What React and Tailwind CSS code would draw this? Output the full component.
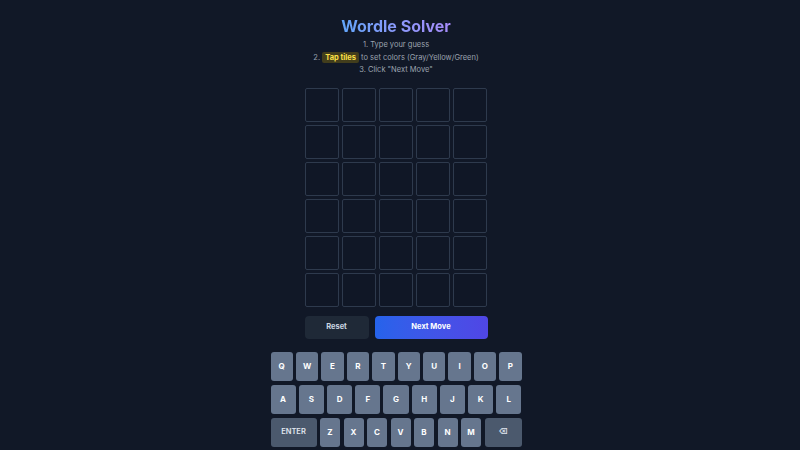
import React from 'react';

const ROWS = [
  ['Q', 'W', 'E', 'R', 'T', 'Y', 'U', 'I', 'O', 'P'],
  ['A', 'S', 'D', 'F', 'G', 'H', 'J', 'K', 'L'],
];
const BOTTOM = ['Z', 'X', 'C', 'V', 'B', 'N', 'M'];

function Key({ label, wide }) {
  return (
    <button
      className={`${wide ? 'bg-[#4b596d] text-[7.5px] font-semibold text-[#e2e8f0]' : 'flex-1 bg-[#66768e] text-[8px] font-bold text-white'} h-[29px] rounded-[3px] flex items-center justify-center`}
      style={wide ? { width: wide } : undefined}
    >
      {label}
    </button>
  );
}

export default function App() {
  return (
    <div
      className="h-[450px] overflow-hidden bg-[#111827] text-gray-400 pr-2"
      style={{ fontFamily: 'Inter, "Noto Sans", sans-serif' }}
    >
      <div className="flex flex-col items-center pt-[15px]">
        {/* Header */}
        <h1 className="text-[16px] leading-[23px] font-bold bg-gradient-to-r from-[#60a5fa] to-[#a78bfa] bg-clip-text text-transparent">
          Wordle Solver
        </h1>
        <div className="mt-[1px] text-[7.5px] leading-[12.5px] text-center text-[#9ca3af]">
          <p>1. Type your guess</p>
          <p>
            2.{' '}
            <span className="font-bold text-[#fde047] bg-[#423d1c] px-[3px] py-[1px] rounded-[2px]">Tap tiles</span>{' '}
            to set colors (Gray/Yellow/Green)
          </p>
          <p>3. Click "Next Move"</p>
        </div>

        {/* Board */}
        <div className="mt-[11px] grid grid-cols-5 gap-[3px]">
          {Array.from({ length: 30 }).map((_, i) => (
            <div
              key={i}
              className="w-[34px] h-[34px] border border-[#2e3a4d] rounded-[2px] bg-[#101726]"
            />
          ))}
        </div>

        {/* Actions */}
        <div className="mt-[9px] flex gap-[6px] w-[183px]">
          <button className="w-[64px] h-[23px] rounded-[4px] bg-[#1f2937] text-[7.5px] font-bold text-[#cbd5e1]">
            Reset
          </button>
          <button className="flex-1 h-[23px] rounded-[4px] bg-gradient-to-r from-[#2563eb] to-[#5046e5] text-[7.5px] font-bold text-white">
            Next Move
          </button>
        </div>

        {/* Keyboard */}
        <div className="mt-[13px] w-[251px] flex flex-col gap-[4px]">
          {ROWS.map((row, r) => (
            <div key={r} className="flex gap-[3px]">
              {row.map((k) => (
                <Key key={k} label={k} />
              ))}
            </div>
          ))}
          <div className="flex gap-[3.5px]">
            <Key label="ENTER" wide="46px" />
            {BOTTOM.map((k) => (
              <Key key={k} label={k} />
            ))}
            <Key label="⌫" wide="37px" />
          </div>
        </div>
      </div>
    </div>
  );
}
